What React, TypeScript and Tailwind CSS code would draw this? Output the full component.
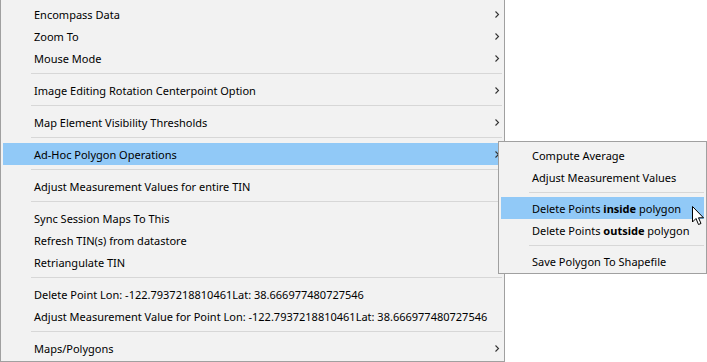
import React from "react";

type Item =
  | { kind: "sep" }
  | { kind: "item"; label: React.ReactNode; sub?: boolean; active?: boolean };

const mainItems: Item[] = [
  { kind: "item", label: "Encompass Data", sub: true },
  { kind: "item", label: "Zoom To", sub: true },
  { kind: "item", label: "Mouse Mode", sub: true },
  { kind: "sep" },
  { kind: "item", label: "Image Editing Rotation Centerpoint Option", sub: true },
  { kind: "sep" },
  { kind: "item", label: "Map Element Visibility Thresholds", sub: true },
  { kind: "sep" },
  { kind: "item", label: "Ad-Hoc Polygon Operations", sub: true, active: true },
  { kind: "sep" },
  { kind: "item", label: "Adjust Measurement Values for entire TIN" },
  { kind: "sep" },
  { kind: "item", label: "Sync Session Maps To This" },
  { kind: "item", label: "Refresh TIN(s) from datastore" },
  { kind: "item", label: "Retriangulate TIN" },
  { kind: "sep" },
  { kind: "item", label: "Delete Point Lon: -122.7937218810461Lat: 38.666977480727546" },
  { kind: "item", label: "Adjust Measurement Value for Point Lon: -122.7937218810461Lat: 38.666977480727546" },
  { kind: "sep" },
  { kind: "item", label: "Maps/Polygons", sub: true },
];

const subItems: Item[] = [
  { kind: "item", label: "Compute Average" },
  { kind: "item", label: "Adjust Measurement Values" },
  { kind: "sep" },
  {
    kind: "item",
    label: (
      <>
        Delete Points <b>inside</b> polygon
      </>
    ),
    active: true,
  },
  {
    kind: "item",
    label: (
      <>
        Delete Points <b>outside</b> polygon
      </>
    ),
  },
  { kind: "sep" },
  { kind: "item", label: "Save Polygon To Shapefile" },
];

const Chevron = () => (
  <svg width="6" height="9" viewBox="0 0 6 9" className="shrink-0">
    <path d="M1.5 1.5 L4.5 4.5 L1.5 7.5" fill="none" stroke="#333" strokeWidth="1.1" />
  </svg>
);

const MenuRows: React.FC<{ items: Item[]; sepClass: string }> = ({ items, sepClass }) => (
  <>
    {items.map((it, i) =>
      it.kind === "sep" ? (
        <div key={i} className={`ml-[28px] h-px bg-[#d7d7d7] ${sepClass}`} />
      ) : (
        <div
          key={i}
          className={`flex h-[22px] items-center justify-between pl-[31px] pr-[2px] ${
            it.active ? "bg-[#91c9f7]" : ""
          }`}
        >
          <span className="whitespace-nowrap pt-[2px]">{it.label}</span>
          {it.sub && <Chevron />}
        </div>
      )
    )}
  </>
);

const App: React.FC = () => {
  return (
    <div
      className="relative h-[362px] w-[707px] overflow-hidden bg-white text-[11px] text-black"
      style={{ fontFamily: '"Segoe UI", "Noto Sans", sans-serif' }}
    >
      <div className="flex h-[362px] w-[505px] flex-col border-x border-b border-[#a0a0a0] bg-[#f2f2f2] px-[2px] pb-[2px] pt-[3px]">
        <MenuRows items={mainItems} sepClass="mt-[4px] mb-[5px]" />
      </div>

      <div className="absolute left-[498px] top-[141px] flex w-[209px] flex-col border border-[#a0a0a0] bg-[#f2f2f2] px-[2px] pb-[1px] pt-[2px]">
        <MenuRows items={subItems} sepClass="mt-[4px] mb-[4px]" />
      </div>

      <svg
        className="absolute left-[692px] top-[206px]"
        width="13"
        height="20"
        viewBox="0 0 13 20"
      >
        <path
          d="M0.5 0.5 L0.5 16 L4 12.5 L6.5 18.5 L9 17.5 L6.5 11.8 L11.5 11.8 Z"
          fill="#fff"
          stroke="#000"
          strokeWidth="1"
          strokeLinejoin="miter"
        />
      </svg>
    </div>
  );
};

export default App;
